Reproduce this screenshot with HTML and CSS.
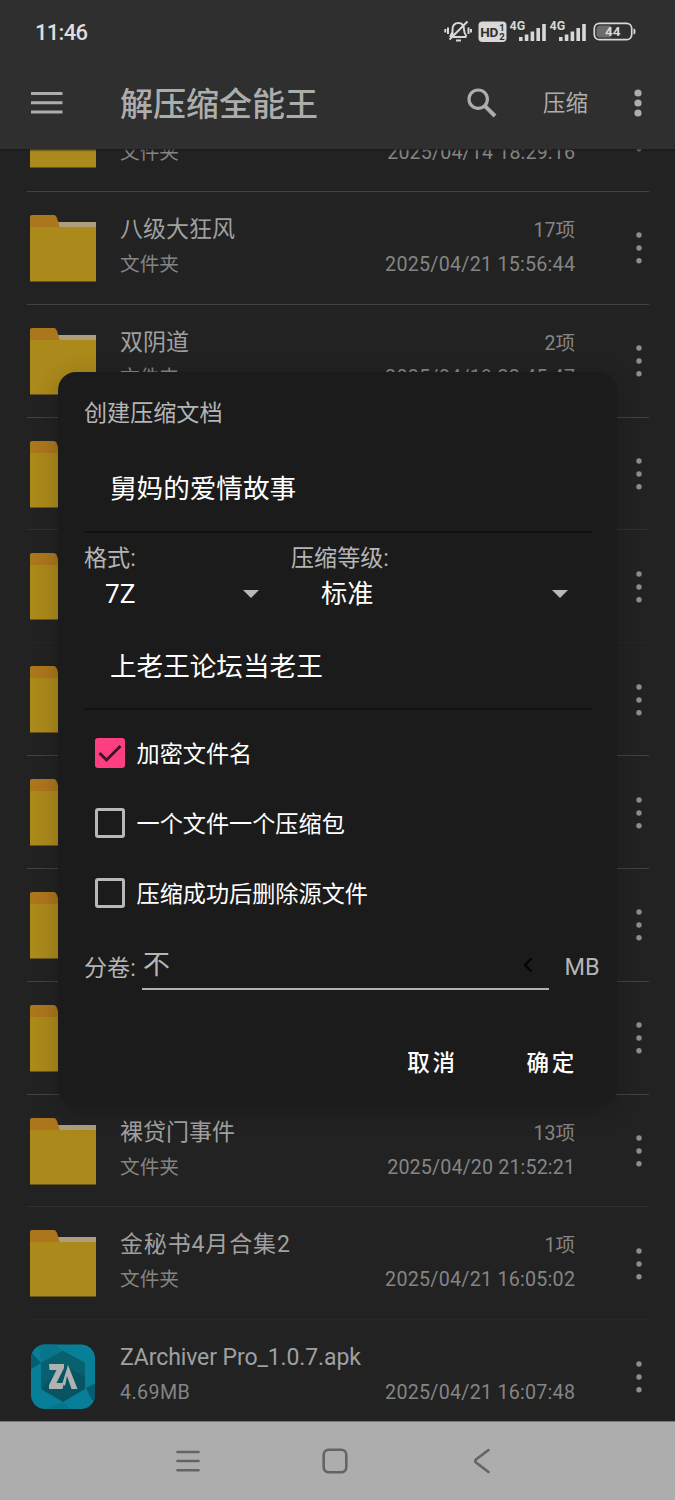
FILE: index.html
```
<!DOCTYPE html>
<html lang="zh-CN">
<head>
<meta charset="utf-8">
<title>解压缩全能王</title>
<link rel="stylesheet" href="styles.css">
</head>
<body>
<svg width="0" height="0" class="defs">
  <symbol id="folder" viewBox="0 0 66 67">
    <path d="M24 7H66V16H24Z" fill="#ad9f7c"/>
    <path d="M0 13V2Q0 0 2 0H24Q26 0 27 3L30 13Z" fill="#ac761c"/>
    <path d="M0 12H66V66.500H0Z" fill="#ab891b"/>
  </symbol>
  <symbol id="dots" viewBox="0 0 6 32">
    <circle cx="3" cy="3" r="2.700"/><circle cx="3" cy="16" r="2.700"/><circle cx="3" cy="28.700" r="2.700"/>
  </symbol>
</svg>
<div class="screen">
  <header class="top">
    <div class="status">
      <span class="clock">11:46</span>
      <svg class="status-icons" width="196" height="28" viewBox="0 0 196 28">
        <g fill="none" stroke="#d8d8d8" stroke-width="2">
          <path d="M6 20H22.500M8.500 19V12.500Q8.500 6 14.500 6Q20 6 20 12.500Q20 16 22.500 19.500M8.500 15L6 20M12 23.500H17M23.500 4.500L5.500 22.500"/>
          <path d="M4 10.500V17M1.300 12V15.500M24.500 10.500V17M27 12V15.500"/>
        </g>
        <rect x="34.500" y="4.500" width="28" height="20.500" rx="4" fill="#d8d8d8"/>
        <text x="36.300" y="19.600" class="hd">HD</text>
        <text x="55.300" y="13.500" class="tiny">1</text><text x="55.300" y="22.500" class="tiny">2</text>
        <text x="65.500" y="13" class="net">4G</text><text x="105.500" y="13" class="net">4G</text>
        <g fill="#d8d8d8">
          <path d="M75 20h3.600v4H75zM80.800 17.500h3.600V24h-3.600zM86.600 14.500h3.600V24h-3.600zM92.400 11h3.600v13h-3.600zM98.200 7h3.600v17h-3.600z"/>
          <path d="M115 20h3.600v4H115zM120.800 17.500h3.600V24h-3.600zM126.600 14.500h3.600V24h-3.600zM132.400 11h3.600v13h-3.600zM138.200 7h3.600v17h-3.600z"/>
        </g>
        <rect x="150.300" y="6.300" width="37.400" height="16.400" rx="5" fill="none" stroke="#d8d8d8" stroke-width="1.700"/>
        <path d="M155.500 8.500h11v12h-11q-3-.5-3-3v-6q0-2.500 3-3z" fill="#6c6c6c"/>
        <path d="M189.500 11.500q2 0 2 3t-2 3z" fill="#d8d8d8"/>
        <text x="161" y="19.300" class="battery">44</text>
      </svg>
    </div>
    <div class="toolbar">
      <svg class="menu" width="32" height="22" viewBox="0 0 32 22"><path d="M0 1.500H31.500M0 10.800H31.500M0 20.100H31.500" stroke="#adadad" stroke-width="3"/></svg>
      <h1>解压缩全能王</h1>
      <svg class="search" width="30" height="30" viewBox="0 0 30 30" fill="none" stroke="#adadad"><circle cx="11.200" cy="11.200" r="9.200" stroke-width="3.200"/><path d="M17.800 17.800L28 28" stroke-width="4"/></svg>
      <span class="compress">压缩</span>
      <svg class="more" width="8" height="28" viewBox="0 0 8 28" fill="#adadad"><circle cx="4" cy="4" r="3.600"/><circle cx="4" cy="14" r="3.600"/><circle cx="4" cy="24" r="3.600"/></svg>
    </div>
  </header>

  <main class="list">
    <div class="row">
      <svg class="icon"><use href="#folder"/></svg>
      <div class="text"><div class="line name-line"></div><div class="line"><span>文件夹</span><span class="date d1">2025/04/14 18:29:16</span></div></div>
      <svg class="dots"><use href="#dots"/></svg>
    </div>
    <div class="row">
      <svg class="icon"><use href="#folder"/></svg>
      <div class="text"><div class="line name-line"><span class="name">八级大狂风</span><span class="count">17项</span></div><div class="line"><span>文件夹</span><span class="date d2">2025/04/21 15:56:44</span></div></div>
      <svg class="dots"><use href="#dots"/></svg>
    </div>
    <div class="row">
      <svg class="icon"><use href="#folder"/></svg>
      <div class="text"><div class="line name-line"><span class="name">双阴道</span><span class="count">2项</span></div><div class="line"><span>文件夹</span><span class="date d2">2025/04/19 22:45:47</span></div></div>
      <svg class="dots"><use href="#dots"/></svg>
    </div>
    <div class="row faint"><svg class="icon"><use href="#folder"/></svg><div class="text"></div><svg class="dots"><use href="#dots"/></svg></div>
    <div class="row fainter"><svg class="icon"><use href="#folder"/></svg><div class="text"></div><svg class="dots"><use href="#dots"/></svg></div>
    <div class="row"><svg class="icon"><use href="#folder"/></svg><div class="text"></div><svg class="dots"><use href="#dots"/></svg></div>
    <div class="row"><svg class="icon"><use href="#folder"/></svg><div class="text"></div><svg class="dots"><use href="#dots"/></svg></div>
    <div class="row"><svg class="icon"><use href="#folder"/></svg><div class="text"></div><svg class="dots"><use href="#dots"/></svg></div>
    <div class="row"><svg class="icon"><use href="#folder"/></svg><div class="text"></div><svg class="dots"><use href="#dots"/></svg></div>
    <div class="row faint">
      <svg class="icon"><use href="#folder"/></svg>
      <div class="text"><div class="line name-line"><span class="name">裸贷门事件</span><span class="count">13项</span></div><div class="line"><span>文件夹</span><span class="date d1">2025/04/20 21:52:21</span></div></div>
      <svg class="dots"><use href="#dots"/></svg>
    </div>
    <div class="row fainter">
      <svg class="icon"><use href="#folder"/></svg>
      <div class="text"><div class="line name-line"><span class="name mixed">金秘书4月合集2</span><span class="count">1项</span></div><div class="line"><span>文件夹</span><span class="date d2">2025/04/21 16:05:02</span></div></div>
      <svg class="dots"><use href="#dots"/></svg>
    </div>
    <div class="row">
      <svg class="icon" viewBox="0 0 66 67">
        <defs><clipPath id="app"><rect x="1" y="1.500" width="64" height="64.500" rx="14"/></clipPath></defs>
        <g clip-path="url(#app)">
          <path d="M0 0H66V67H0Z" fill="#087f98"/>
          <path d="M0 8L11 20L0 27ZM66 40L56 45L62 57L66 56Z" fill="#075c6d"/>
          <path d="M11 20L33 8L22 0H8ZM33 59L42 67H12Z" fill="#07768d"/>
          <path d="M33 8L55 20V46L33 59L11 46V20Z" fill="#075562"/>
          <path d="M33 8L11 20V46L33 22L55 34V20Z" fill="#085f6e"/>
        </g>
        <path d="M19 21H34V25L26.500 40H34L32.500 46H19V42L26.500 27H19.500ZM38 22L47.500 46H41.500L37 33L35 43L32.500 40Z" fill="#b0b2b2"/>
      </svg>
      <div class="text"><div class="line name-line"><span class="name latin">ZArchiver Pro_1.0.7.apk</span></div><div class="line"><span class="size">4.69MB</span><span class="date d2">2025/04/21 16:07:48</span></div></div>
      <svg class="dots"><use href="#dots"/></svg>
    </div>
  </main>

  <nav class="nav">
    <svg width="24" height="24" viewBox="0 0 24 24"><path d="M1.500 3H22.500M1.500 12H22.500M1.500 21.200H22.500"/></svg>
    <svg width="26" height="26" viewBox="0 0 26 26"><rect x="1.700" y="1.700" width="22.600" height="22.600" rx="5"/></svg>
    <svg width="18" height="26" viewBox="0 0 18 26"><path d="M15.500 2L3 11.500Q1.500 13 3 14.500L15.500 24"/></svg>
  </nav>

  <section class="dialog">
    <h2>创建压缩文档</h2>
    <div class="field first">舅妈的爱情故事</div>
    <div class="options">
      <div class="option"><label>格式:</label><div class="select"><span class="z">7Z</span><i class="arrow"></i></div></div>
      <div class="option wide"><label>压缩等级:</label><div class="select"><span>标准</span><i class="arrow"></i></div></div>
    </div>
    <div class="field second">上老王论坛当老王</div>
    <div class="checks">
      <div class="check"><svg width="30" height="30" viewBox="0 0 30 30"><rect width="30" height="30" rx="3" fill="#fe3e83"/><path d="M4.500 15L11.500 22L25.500 8" fill="none" stroke="#3d1726" stroke-width="3"/></svg><span>加密文件名</span></div>
      <div class="check"><i class="box"></i><span>一个文件一个压缩包</span></div>
      <div class="check"><i class="box"></i><span>压缩成功后删除源文件</span></div>
    </div>
    <div class="split">
      <label>分卷:</label>
      <div class="volume"><span>不</span><svg width="10" height="16" viewBox="0 0 10 16"><path d="M8.500 1.500L2 8L8.500 14.500" fill="none" stroke="#050505" stroke-width="2.400"/></svg></div>
      <span class="unit">MB</span>
    </div>
    <div class="actions"><span>取消</span><span>确定</span></div>
  </section>
</div>
</body>
</html>
```
FILE: styles.css
```
* { box-sizing: border-box; }
body { margin: 0; background: #222; font-family: Roboto, "Noto Sans CJK SC", sans-serif; }
h1, h2 { margin: 0; font-weight: 400; }
svg { display: block; flex: none; }
.defs { position: absolute; }
.screen { position: relative; width: 675px; height: 1500px; overflow: hidden; display: flex; flex-direction: column; background: #222; }

.top { height: 149px; flex: none; background: #2f2f2f; color: #adadad; box-shadow: 0 1px 2px #1b1b1b; z-index: 1; }
.status { height: 62px; padding: 0 37px 0 35px; display: flex; align-items: center; justify-content: space-between; }
.clock { font-size: 22px; line-height: 28px; font-weight: 500; color: #dedede; padding-top: 3px; letter-spacing: -.7px; }
.status-icons { margin: 0 -1.500px 0 0; }
.status-icons text { font-family: Roboto, sans-serif; font-weight: 700; fill: #d8d8d8; }
.status-icons .hd { font-size: 13.500px; fill: #2f2f2f; letter-spacing: -.4px; }
.status-icons .tiny { font-size: 9.500px; fill: #2f2f2f; }
.status-icons .net { font-size: 12.500px; }
.status-icons .battery { font-size: 13.500px; }
.toolbar { height: 82px; padding-left: 31px; display: flex; align-items: center; }
.toolbar h1 { margin: -3px 0 0 57px; width: 347px; font: 500 33px/48px "Noto Sans CJK SC", sans-serif; }
.compress { margin-left: 46px; width: 46px; font-size: 22.500px; line-height: 32px; white-space: nowrap; }
.more { margin-left: 45px; }

.list { height: 1272px; flex: none; overflow: hidden; padding-left: 27px; }
.row { width: 622px; height: 112.850px; display: flex; padding: 23px 7px 0 3px; border-bottom: 1px solid #414141; }
.row:first-child { margin-top: -70px; }
.row:first-child .icon { margin-top: -1px; }
.row:first-child .line { position: relative; top: 1px; }
.row:last-child { border: 0; }
.row.faint { border-color: #303030; }
.row.fainter { border-color: #262626; }
.icon { width: 66px; height: 67px; }
.text { width: 455px; margin-left: 24px; padding-top: 1.500px; flex: none; color: #858585; font-size: 19.700px; }
.line { height: 35px; display: flex; align-items: center; justify-content: space-between; line-height: 30px; white-space: nowrap; }
.name-line { margin-top: -4px; }
.name { font-size: 23px; color: #a0a0a0; }
.name.latin { letter-spacing: -.1px; }
.name.mixed { letter-spacing: .85px; }
.size { letter-spacing: .4px; }
.count { font-size: 19.500px; position: relative; top: 1px; }
.date { font-size: 19.700px; }
.d1 { letter-spacing: .12px; margin-right: -.12px; }
.d2 { letter-spacing: .24px; margin-right: -.24px; }
.dots { width: 6px; height: 32px; margin: 17.500px 0 0 60.500px; fill: #8d8d8d; }

.nav { flex: 1; background: #adadad; border-top: 1px solid #777; display: flex; align-items: center; padding-left: 176px; }
.nav svg { fill: none; stroke: #646464; stroke-width: 2.600; stroke-linecap: round; }
.nav svg + svg { margin-left: 122px; }
.nav svg:last-child { margin-left: 125px; }

/* The dialog floats above the dimmed file list. */
.dialog { position: absolute; left: 58px; top: 372px; width: 559px; height: 734px; background: #1b1b1b; border-radius: 18px; padding: 0 17px 0 26px; color: #fff; box-shadow: 0 6px 24px rgba(0,0,0,.22); z-index: 2; }
.dialog h2, .dialog label { font-size: 23.100px; color: #b5b5b5; white-space: nowrap; }
.dialog h2 { height: 82px; line-height: 84px; }
.field { width: 508px; font-size: 26.600px; padding-left: 26px; line-height: 40px; border-bottom: 2px solid #111; }
.field.first { margin-top: 15px; padding-bottom: 22px; }
.field.second { margin-top: 29px; padding-bottom: 21px; }
.options { display: flex; margin-top: 13.500px; }
.option { width: 207px; }
.option.wide { width: 301px; }
.option label { display: block; line-height: 24px; }
.select { height: 47px; display: flex; align-items: center; justify-content: space-between; padding: 0 32px 0 21px; font-size: 26.200px; line-height: 36px; }
.wide .select { padding: 0 24px 0 30px; }
.arrow { border: solid transparent; border-width: 8px 8px 0; border-top-color: #b8b8b8; }
.checks { margin-top: 8.500px; padding-left: 10.500px; }
.check { height: 70px; display: flex; align-items: center; gap: 12px; font-size: 23.150px; }
.check span { margin-top: -2px; }
.box { width: 30px; height: 30px; border: 3px solid #b8b8b8; border-radius: 3px; }
.split { height: 78px; display: flex; align-items: center; }
.split label { width: 58px; flex: none; margin-top: -3px; }
.volume { width: 407px; flex: none; height: 46px; border-bottom: 2px solid #b0b0b0; display: flex; align-items: center; justify-content: space-between; padding: 0 16px 2px 1px; font-size: 27px; color: #b5b5b5; line-height: 36px; }
.unit { margin-left: 15.500px; font-size: 23.500px; color: #b5b5b5; }
.actions { margin-top: 30px; height: 50px; display: flex; align-items: center; justify-content: flex-end; gap: 69px; padding-right: 23px; font-size: 22.500px; font-weight: 500; letter-spacing: 2.700px; white-space: nowrap; }
```
